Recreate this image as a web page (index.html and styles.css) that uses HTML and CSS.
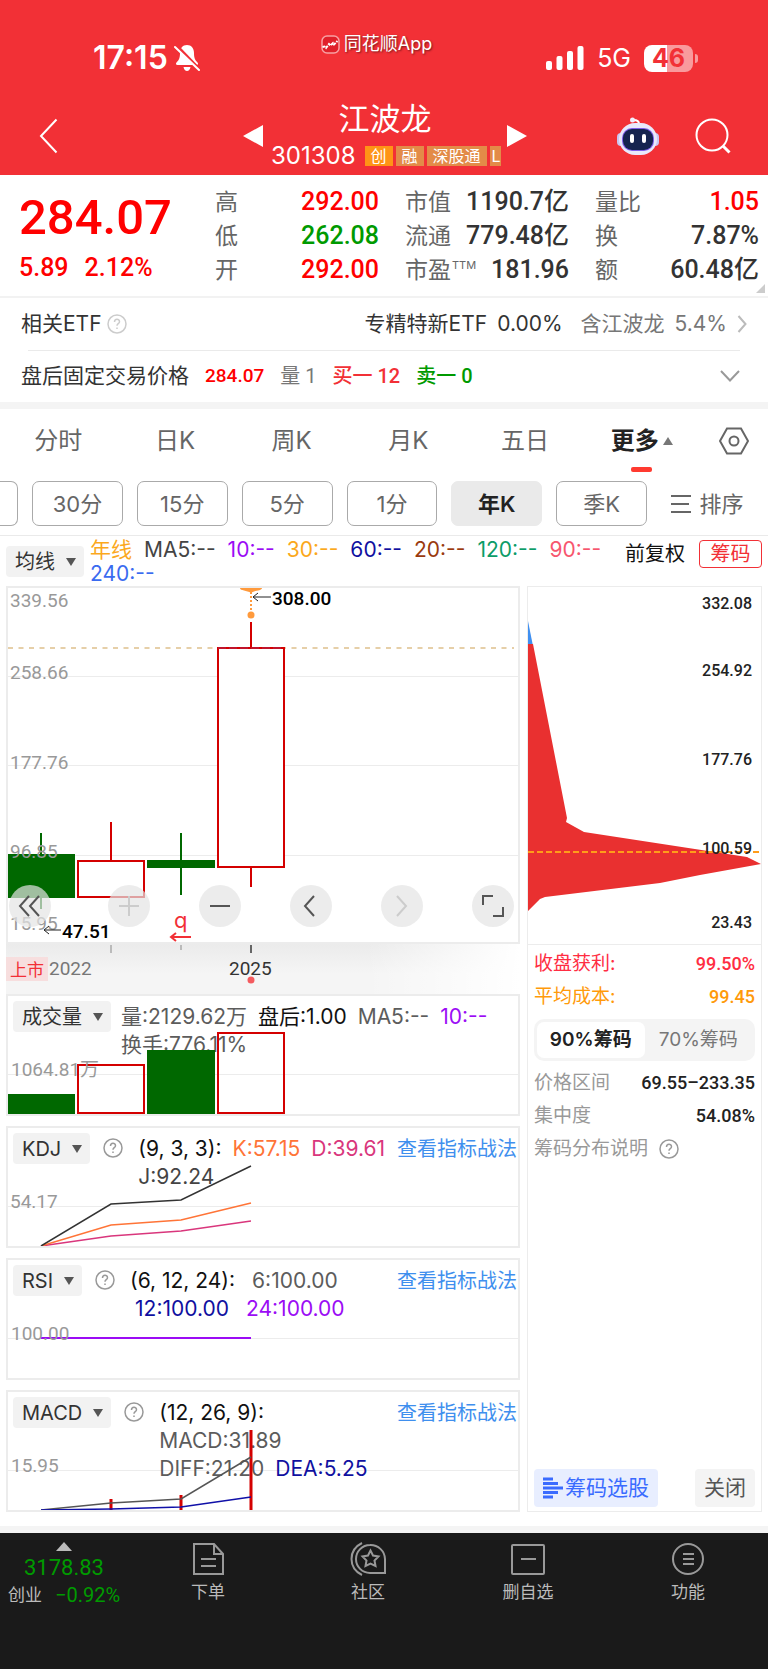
FILE: index.html
```html
<!DOCTYPE html>
<html lang="zh-CN">
<head>
  <meta charset="UTF-8">
  <meta name="viewport" content="width=device-width, initial-scale=1.0">
  <title>江波龙 301308</title>
  <link rel="stylesheet" href="styles.css">
</head>
<body>
  <header class="top">
    <div class="status">
      <div class="status-time">
        <span>17:15</span>
        <svg width="26" height="28" viewBox="0 0 26 28">
          <path d="M13 1c-4.500 0-7 3.500-7 8 0 5-1 7-3.500 9.500-1 1-.5 2.500 1 2.500h19c1.500 0 2-1.500 1-2.500C21 16 20 14 20 9c0-4.500-2.500-8-7-8z" fill="#fff"/>
          <path d="M9.500 23h7c-.5 2.500-1.800 4-3.500 4s-3-1.500-3.500-4z" fill="#fff"/>
          <path d="M3.500 2.500L26 26" stroke="#f23036" stroke-width="3"/>
          <path d="M1 3l24 23" stroke="#fff" stroke-width="2" stroke-linecap="round"/>
        </svg>
      </div>
      <div class="app-mark">
        <svg width="19" height="19" viewBox="0 0 19 19">
          <rect x="1" y="1" width="17" height="17" rx="5" fill="#e0202a" stroke="#f8a0a3" stroke-width="1.500"/>
          <path d="M1.500 12l2-.5 1.500 1.500L8 9l1.500 1.500L12 8l1 1.500L16.500 6" fill="none" stroke="#fff" stroke-width="2" stroke-dasharray="3 1"/>
        </svg>
        <span>同花顺App</span>
      </div>
      <div class="status-right">
        <svg width="38" height="26" viewBox="0 0 38 26" fill="#fff">
          <rect x="0" y="16" width="6" height="9" rx="2"/>
          <rect x="10.500" y="11" width="6" height="14" rx="2"/>
          <rect x="21" y="6" width="6" height="19" rx="2"/>
          <rect x="31.500" y="1" width="6" height="24" rx="2"/>
        </svg>
        <span class="network">5G</span>
        <span class="battery">46</span>
      </div>
    </div>
    <nav class="nav">
      <button class="icon-btn" aria-label="返回">
        <svg width="20" height="36" viewBox="0 0 20 36" fill="none" stroke="#fff" stroke-width="2"><path d="M17.500 1.500L2 18l15.500 16.500"/></svg>
      </button>
      <div class="stock">
        <button class="icon-btn" aria-label="上一只">
          <svg width="20" height="22" viewBox="0 0 20 22"><path d="M20 0v22L0 11z" fill="#fff"/></svg>
        </button>
        <div class="stock-title">
          <h1>江波龙</h1>
          <div class="stock-code">
            <span class="code">301308</span>
            <span class="tag tag-main">创</span>
            <span class="tag">融</span>
            <span class="tag">深股通</span>
            <span class="tag tag-last">L</span>
          </div>
        </div>
        <button class="icon-btn" aria-label="下一只">
          <svg width="20" height="22" viewBox="0 0 20 22"><path d="M0 0v22l20-11z" fill="#fff"/></svg>
        </button>
      </div>
      <div class="nav-tools">
        <button class="icon-btn" aria-label="智能助手">
          <svg width="42" height="40" viewBox="0 0 42 40">
            <path d="M22 8c0-3-2-4-5.500-4" fill="none" stroke="#fff" stroke-width="2"/>
            <circle cx="15.500" cy="4" r="2.500" fill="#f2eefc"/>
            <rect x="0" y="17" width="8" height="13" rx="4" fill="#c9c6f2"/>
            <rect x="34" y="17" width="8" height="13" rx="4" fill="#c9c6f2"/>
            <rect x="2" y="7" width="38" height="32" rx="16" fill="#e9e8fb"/>
            <rect x="5" y="12" width="32" height="23" rx="10" fill="#7f5de8"/>
            <rect x="6" y="13" width="30" height="21" rx="9" fill="#16244f"/>
            <rect x="13" y="18" width="4" height="9" rx="2" fill="#fff"/>
            <rect x="25" y="18" width="4" height="9" rx="2" fill="#fff"/>
          </svg>
        </button>
        <button class="icon-btn" aria-label="搜索">
          <svg width="36" height="36" viewBox="0 0 36 36" fill="none" stroke="#fff" stroke-width="2">
            <circle cx="17" cy="17" r="15.500"/><path d="M28 28l6.500 6.500" stroke-width="3"/>
          </svg>
        </button>
      </div>
    </nav>
  </header>

  <section class="quote">
    <div class="price">
      <div class="price-now">284.07</div>
      <div class="price-change"><span>5.89</span><span>2.12%</span></div>
    </div>
    <dl class="stats">
      <div><dt>高</dt><dd class="up">292.00</dd></div>
      <div><dt>低</dt><dd class="down">262.08</dd></div>
      <div><dt>开</dt><dd class="up">292.00</dd></div>
    </dl>
    <dl class="stats">
      <div><dt>市值</dt><dd>1190.7亿</dd></div>
      <div><dt>流通</dt><dd>779.48亿</dd></div>
      <div><dt>市盈<sup>TTM</sup></dt><dd>181.96</dd></div>
    </dl>
    <dl class="stats">
      <div><dt>量比</dt><dd class="up">1.05</dd></div>
      <div><dt>换</dt><dd>7.87%</dd></div>
      <div><dt>额</dt><dd>60.48亿</dd></div>
    </dl>
    <span class="corner"></span>
  </section>

  <section class="row etf">
    <span>相关ETF</span>
    <svg class="help light" width="20" height="20" viewBox="0 0 20 20"><use href="#help"/></svg>
    <a class="etf-link" href="#">
      <span>专精特新ETF</span><span>0.00%</span><span class="muted etf-hold">含江波龙</span><span class="muted">5.4%</span>
      <svg width="10" height="18" viewBox="0 0 10 18" fill="none" stroke="#bbb" stroke-width="2"><path d="M1.500 1l7 8-7 8"/></svg>
    </a>
  </section>
  <section class="row after-hours">
    <span class="after-label">盘后固定交易价格</span>
    <b class="up">284.07</b>
    <span class="muted">量 1</span>
    <span class="buy">买一 12</span>
    <span class="sell">卖一 0</span>
    <button class="icon-btn expand" aria-label="展开">
      <svg width="20" height="12" viewBox="0 0 20 12" fill="none" stroke="#999" stroke-width="2"><path d="M1 1l9 9.500L19 1"/></svg>
    </button>
  </section>
  <div class="band"></div>

  <nav class="tabs">
    <button>分时</button>
    <button>日K</button>
    <button>周K</button>
    <button>月K</button>
    <button>五日</button>
    <button class="active">更多<i class="tri-up"></i></button>
    <button aria-label="设置">
      <svg width="30" height="28" viewBox="0 0 30 28" fill="none" stroke="#666" stroke-width="2">
        <path d="M8 1.500h14L29 14l-7 12.500H8L1 14z"/><circle cx="15" cy="14" r="4.500"/>
      </svg>
    </button>
  </nav>
  <div class="periods">
    <button class="cut" aria-label="60分"></button>
    <button>30分</button>
    <button>15分</button>
    <button>5分</button>
    <button>1分</button>
    <button class="active">年K</button>
    <button>季K</button>
    <button class="sort">
      <svg width="20" height="18" viewBox="0 0 20 18" stroke="#666" stroke-width="2"><path d="M0 1h20M0 9h18M0 17h20"/></svg>
      排序
    </button>
  </div>

  <section class="averages">
    <button class="picker">均线<i class="tri-down"></i></button>
    <div class="ma-list">
      <span class="c-gold">年线</span><span class="c-dark">MA5:--</span><span class="c-purple">10:--</span><span class="c-gold">30:--</span><span class="c-navy">60:--</span><span class="c-brown">20:--</span><span class="c-green">120:--</span><span class="c-pink">90:--</span><span class="c-blue">240:--</span>
    </div>
    <button class="adjust">前复权</button>
    <button class="chips-btn">筹码</button>
  </section>

  <main class="board">
    <div class="charts">
      <div class="kline">
        <svg class="chart" viewBox="0 0 510 354">
          <path class="grid" d="M0 88.500h510M0 177.500h510M0 267.500h510"/>
          <path d="M0 60h506" stroke="#e6cfa8" stroke-width="2" stroke-dasharray="5 5.500"/>
          <path d="M33 245v76M173 245v62" stroke="#006800" stroke-width="2"/>
          <rect x="0" y="266" width="67" height="44" fill="#006800"/>
          <rect x="139" y="272" width="68" height="8" fill="#006800"/>
          <path d="M103 234v38M243 34v26M243 279v20" class="red-line"/>
          <rect x="70" y="273" width="66" height="36" class="red-box"/>
          <rect x="210" y="60" width="66" height="219" class="red-box"/>
          <path d="M210 60h66" stroke="#c0142c" stroke-width="2" stroke-dasharray="8 3"/>
          <path d="M232 0h22c0 3-7 2-11 5-4-3-11-2-11-5z" fill="#ff9a3c"/>
          <path d="M243 4v20" stroke="#ff9a3c" stroke-width="2" stroke-dasharray="2 2"/>
          <circle cx="243" cy="27" r="3.500" fill="#ff9a3c"/>
          <g class="axis-text">
            <text x="2" y="19">339.56</text>
            <text x="2" y="91">258.66</text>
            <text x="2" y="181">177.76</text>
            <text x="2" y="270">96.85</text>
            <text x="2" y="342">15.95</text>
          </g>
          <path d="M263 9h-18M250 5l-5 4 5 4M53 342H36M41 338l-5 4 5 4" fill="none" stroke="#222"/>
          <g class="mark-text">
            <text x="264" y="17">308.00</text>
            <text x="54" y="350">47.51</text>
          </g>
          <text x="166" y="340" class="q-mark">q</text>
          <path d="M183 349h-20M168 345l-5 4 5 4" fill="none" stroke="#f23036" stroke-width="2"/>
        </svg>
        <div class="tools">
          <button aria-label="最早"><svg viewBox="0 0 42 42"><path d="M20 11L11 21l9 10M30 11l-9 10 9 10"/></svg></button>
          <div class="tools-right">
            <button aria-label="放大" disabled><svg viewBox="0 0 42 42"><path d="M11 21h20M21 11v20"/></svg></button>
            <button aria-label="缩小"><svg viewBox="0 0 42 42"><path d="M11 21h20"/></svg></button>
            <button aria-label="左移"><svg viewBox="0 0 42 42"><path d="M24 11l-9 10 9 10"/></svg></button>
            <button aria-label="右移" disabled><svg viewBox="0 0 42 42"><path d="M16 11l9 10-9 10"/></svg></button>
            <button aria-label="全屏"><svg viewBox="0 0 42 42"><path d="M11 20v-9h10M31 22v9H21"/></svg></button>
          </div>
        </div>
      </div>

      <div class="dates">
        <svg class="chart" viewBox="0 0 514 50">
          <path d="M105 1v8M175 1v5" stroke="#aaa" stroke-width="1.500"/>
          <path d="M245 1v8" stroke="#666" stroke-width="2"/>
          <rect x="0" y="13" width="42" height="24" fill="#f7dede"/>
          <text x="4" y="32" class="listed">上市</text>
          <text x="43" y="31" class="year">2022</text>
          <text x="223" y="31" class="year now">2025</text>
          <circle cx="245" cy="36" r="3.500" fill="#f45b5f"/>
        </svg>
      </div>

      <div class="panel">
        <div class="panel-head">
          <button class="picker">成交量<i class="tri-down"></i></button>
          <div class="legend">
            <div><span class="c-gray">量:2129.62万</span><span class="c-black">盘后:1.00</span><span class="c-gray">MA5:--</span><span class="c-purple">10:--</span></div>
            <div><span class="c-gray">换手:776.11%</span></div>
          </div>
        </div>
        <svg class="chart" viewBox="0 0 510 118">
          <rect x="0" y="98" width="67" height="20" fill="#006800"/>
          <rect x="139" y="54" width="68" height="64" fill="#006800"/>
          <rect x="70" y="69" width="66" height="48" class="red-box open"/>
          <rect x="210" y="37" width="66" height="80" class="red-box open"/>
          <text x="3" y="80" class="axis-text">1064.81万</text>
        </svg>
      </div>

      <div class="panel">
        <div class="panel-head">
          <button class="picker">KDJ<i class="tri-down"></i></button>
          <svg class="help" width="20" height="20" viewBox="0 0 20 20"><use href="#help"/></svg>
          <div class="legend">
            <div><span class="c-black">(9, 3, 3):</span><span class="c-orange">K:57.15</span><span class="c-magenta">D:39.61</span></div>
            <div><span class="c-dark">J:92.24</span></div>
          </div>
          <a class="guide" href="#">查看指标战法</a>
        </div>
        <svg class="chart" viewBox="0 0 510 118">
          <g fill="none" stroke-width="1.500">
            <path d="M33 118l70-10 70-5 70-10" stroke="#d9367c"/>
            <path d="M33 118l70-21 70-5 70-17" stroke="#ff7437"/>
            <path d="M33 118l70-42 70-4 70-34" stroke="#333"/>
          </g>
          <text x="2" y="80" class="axis-text">54.17</text>
        </svg>
      </div>

      <div class="panel">
        <div class="panel-head">
          <button class="picker">RSI<i class="tri-down"></i></button>
          <svg class="help" width="20" height="20" viewBox="0 0 20 20"><use href="#help"/></svg>
          <div class="legend wide">
            <div><span class="c-black">(6, 12, 24):</span><span class="c-gray">6:100.00</span></div>
            <div><span class="c-navy">12:100.00</span><span class="c-purple">24:100.00</span></div>
          </div>
          <a class="guide" href="#">查看指标战法</a>
        </div>
        <svg class="chart" viewBox="0 0 510 118">
          <path d="M33 78h210" stroke="#9b0cf5" stroke-width="2"/>
          <text x="3" y="80" class="axis-text">100.00</text>
        </svg>
      </div>

      <div class="panel">
        <div class="panel-head">
          <button class="picker">MACD<i class="tri-down"></i></button>
          <svg class="help" width="20" height="20" viewBox="0 0 20 20"><use href="#help"/></svg>
          <div class="legend">
            <div><span class="c-black">(12, 26, 9):</span></div>
            <div><span class="c-gray">MACD:31.89</span></div>
            <div><span class="c-gray">DIFF:21.20</span><span class="c-navy">DEA:5.25</span></div>
          </div>
          <a class="guide" href="#">查看指标战法</a>
        </div>
        <svg class="chart" viewBox="0 0 510 118">
          <path d="M103 107v11M173 103v15M243 38v80" stroke="#d40000" stroke-width="3"/>
          <g fill="none" stroke-width="1.500">
            <path d="M33 118l70-7 70-4 70-42" stroke="#555"/>
            <path d="M33 118l70-1 70-2 70-10" stroke="#1010a8"/>
          </g>
          <text x="3" y="80" class="axis-text">15.95</text>
        </svg>
      </div>
    </div>

    <aside class="chips">
      <svg class="chart" viewBox="0 0 233 357">
        <path d="M0 34l5 25H0z" fill="#3f8ff0"/>
        <path d="M0 57h5l34 174-1 4 18 10 163 25 14 7-61 11-40 8-115 14-5 2-12 12z" fill="#e93030"/>
        <path d="M0 265h233" stroke="#ff9c1a" stroke-width="2" stroke-dasharray="6 3"/>
        <g class="chip-text" text-anchor="end">
          <text x="224" y="22">332.08</text>
          <text x="224" y="89">254.92</text>
          <text x="224" y="178">177.76</text>
          <text x="224" y="267">100.59</text>
          <text x="224" y="341">23.43</text>
        </g>
      </svg>
      <div class="chip-body">
        <dl class="chip-list">
          <div class="c-red"><dt>收盘获利:</dt><dd>99.50%</dd></div>
          <div class="c-amber"><dt>平均成本:</dt><dd>99.45</dd></div>
        </dl>
        <div class="segment">
          <button class="active">90%筹码</button>
          <button>70%筹码</button>
        </div>
        <dl class="chip-list">
          <div><dt>价格区间</dt><dd>69.55–233.35</dd></div>
          <div><dt>集中度</dt><dd>54.08%</dd></div>
          <div class="chip-note"><dt>筹码分布说明</dt><dd><svg class="help" width="20" height="20" viewBox="0 0 20 20"><use href="#help"/></svg></dd></div>
        </dl>
        <div class="chip-actions">
          <button class="pick">
            <svg width="20" height="22" viewBox="0 0 20 22" stroke="#3a6bff" stroke-width="3"><path d="M0 2h10M0 6.500h15M0 11h20M0 15.500h15M0 20h10"/></svg>筹码选股
          </button>
          <button class="close">关闭</button>
        </div>
      </div>
    </aside>
  </main>
  <div class="band"></div>

  <footer class="bottom">
    <a class="index" href="#">
      <i class="tri-up"></i>
      <span class="index-value">3178.83</span>
      <span class="index-row"><span>创业</span><span class="index-rate">−0.92%</span></span>
    </a>
    <a href="#">
      <svg width="36" height="34" viewBox="0 0 36 34"><path d="M4 2h20l9 10v20H4zM24 2v10h9M11 17h15M11 24h15"/></svg>
      下单
    </a>
    <a href="#">
      <svg width="36" height="34" viewBox="0 0 36 34"><path d="M12 1C-2 8-2 26 12 33M20 3a14 14 0 1 0 0 28h15V17A14.500 14.500 0 0 0 20 3z"/><path d="M20.500 8.500l2.500 5 5.500 1-4 4 1 5.500-5-2.500-5 2.500 1-5.500-4-4 5.500-1z"/></svg>
      社区
    </a>
    <a href="#">
      <svg width="36" height="34" viewBox="0 0 36 34"><rect x="2" y="3" width="32" height="29" rx="1"/><path d="M11 17h15"/></svg>
      删自选
    </a>
    <a href="#">
      <svg width="36" height="34" viewBox="0 0 36 34"><circle cx="18" cy="17" r="15"/><path d="M13 12h11M13 17h11M13 22h11"/></svg>
      功能
    </a>
  </footer>

  <!-- shared question mark icon -->
  <svg class="defs" width="0" height="0">
    <symbol id="help" viewBox="0 0 20 20">
      <circle cx="10" cy="10" r="9" fill="none" stroke="currentColor" stroke-width="1.500"/>
      <path d="M7.500 8c0-3.500 5-3.500 5-.3 0 2-2.500 2-2.500 4M10 13.500v1.500" fill="none" stroke="currentColor" stroke-width="1.500"/>
    </symbol>
  </svg>
</body>
</html>
```
FILE: styles.css
```css
* {
  box-sizing: border-box;
}
body {
  margin: 0;
  background: #fff;
  color: #333;
  font-family: Inter, "Noto Sans CJK SC", sans-serif;
  font-size: 20px;
  line-height: 28px;
}
button {
  margin: 0;
  padding: 0;
  border: 0;
  background: none;
  color: inherit;
  font: inherit;
  white-space: nowrap;
}
a {
  color: inherit;
  text-decoration: none;
}
h1, dl, dd {
  margin: 0;
}
svg {
  display: block;
  flex: none;
}
.defs {
  position: absolute;
}
.icon-btn {
  display: flex;
}
.chart {
  width: 100%;
  height: auto;
}
.up { color: #ff0000; }
.down { color: #009a00; }
.muted { color: #777; }

/* header */
.top {
  background: #f23036;
  color: #fff;
}
.status {
  display: grid;
  grid-template-columns: 1fr auto 1fr;
  height: 88px;
  padding: 28px 75px 0 60px;
}
.status-time {
  display: flex;
  align-items: center;
  gap: 6px;
  padding-left: 33px;
  font-size: 32px;
  font-weight: 600;
}
.app-mark {
  display: flex;
  align-items: center;
  gap: 4px;
  height: 32px;
  font-size: 18px;
  text-shadow: 1px 1px 2px rgba(0, 0, 0, 0.5);
}
.status-right {
  display: flex;
  align-items: center;
  justify-content: flex-end;
  gap: 13px;
}
.network {
  font-size: 25px;
}
.battery {
  position: relative;
  width: 49px;
  height: 27px;
  border-radius: 8px;
  background: linear-gradient(90deg, #fff 46%, #f99a9d 46%);
  color: #f23036;
  font-size: 25px;
  font-weight: 700;
  line-height: 27px;
  text-align: center;
}
.battery::after {
  content: "";
  position: absolute;
  top: 9px;
  right: -5px;
  width: 3px;
  height: 9px;
  border-radius: 0 3px 3px 0;
  background: #f99a9d;
}
.nav {
  display: grid;
  grid-template-columns: 1fr auto 1fr;
  align-items: center;
  height: 87px;
  padding: 8px 37px 0 39px;
}
.stock {
  display: flex;
  align-items: center;
  gap: 8px;
}
.stock-title {
  width: 228px;
  text-align: center;
}
.stock-title h1 {
  font-size: 31px;
  font-weight: 400;
  line-height: 40px;
}
.stock-code {
  display: flex;
  align-items: center;
  gap: 3px;
  height: 34px;
}
.code {
  margin-right: 6px;
  font-size: 24px;
}
.tag {
  flex: none;
  padding: 0 6px;
  background: #e38b48;
  font-size: 16px;
  line-height: 20px;
}
.tag-main {
  background: #ff9416;
}
.tag-last {
  padding: 0 0 0 2px;
}
.nav-tools {
  display: flex;
  align-items: center;
  justify-content: flex-end;
  gap: 36px;
}

/* quote */
.quote {
  position: relative;
  display: grid;
  grid-template-columns: 1fr repeat(3, 164px);
  gap: 26px;
  height: 123px;
  padding: 10px 9px 0 19px;
  border-bottom: 2px solid #f2f2f2;
}
.price {
  color: #ff0000;
  font-family: Roboto, sans-serif;
  font-weight: 500;
}
.price-now {
  font-size: 49px;
  line-height: 66px;
}
.price-change {
  display: flex;
  gap: 16px;
  font-size: 25px;
  line-height: 34px;
}
.stats div {
  display: flex;
  justify-content: space-between;
  line-height: 34px;
}
.stats dt {
  color: #666;
  font-size: 23px;
  white-space: nowrap;
}
.stats sup {
  margin-left: 1px;
  font-size: 11px;
  line-height: 0;
}
.stats dd {
  font-family: Roboto, "Noto Sans CJK SC", sans-serif;
  font-size: 25px;
  font-weight: 500;
  white-space: nowrap;
}
.corner {
  position: absolute;
  right: 3px;
  bottom: 3px;
  border-left: 9px solid transparent;
  border-bottom: 9px solid #ccc;
}
.row {
  display: flex;
  align-items: center;
  height: 52px;
  padding: 0 21px;
}
.etf {
  font-size: 21px;
}
.help {
  color: #999;
}
.help.light {
  margin-left: 5px;
  color: #ccc;
}
.etf-link {
  display: flex;
  align-items: center;
  gap: 10px;
  margin-left: auto;
}
.etf-hold {
  margin-left: 8px;
}
.after-hours {
  position: relative;
  gap: 16px;
  font-family: Roboto, "Noto Sans CJK SC", sans-serif;
}
.after-hours::before {
  content: "";
  position: absolute;
  top: 0;
  left: 28px;
  right: 28px;
  border-top: 1px solid #eaeaea;
}
.after-label {
  font-size: 21px;
}
.after-hours b {
  font-size: 19px;
  font-weight: 500;
}
.buy {
  color: #f23036;
  font-weight: 500;
}
.sell {
  color: #009a00;
  font-weight: 500;
}
.expand {
  margin-left: auto;
  margin-right: 7px;
}
.band {
  height: 7px;
  background: #f4f4f4;
}

/* tabs */
.tabs {
  display: grid;
  grid-template-columns: repeat(6, 1fr) 68px;
  height: 64px;
  color: #666;
  font-size: 24px;
}
.tabs button {
  position: relative;
  display: flex;
  align-items: center;
  justify-content: center;
}
.tabs .active {
  gap: 4px;
  color: #222;
  font-weight: 700;
}
.tabs .active::after {
  content: "";
  position: absolute;
  bottom: 1px;
  left: calc(50% - 11px);
  width: 21px;
  height: 5px;
  border-radius: 2px;
  background: #ff3a30;
}
.tri-up {
  border: 5px solid transparent;
  border-top: 0;
  border-bottom: 8px solid #777;
}
.tri-down {
  border: 5px solid transparent;
  border-bottom: 0;
  border-top: 8px solid #555;
}
.periods {
  display: grid;
  grid-template-columns: 18px repeat(6, 1fr) 93px;
  gap: 14px;
  height: 63px;
  padding: 8px 14px 9px 0;
  border-bottom: 1px solid #eaeaea;
  color: #666;
  font-size: 22px;
}
.periods button {
  border: 1px solid #aaa;
  border-radius: 7px;
}
.periods .cut {
  border-left: 0;
  border-radius: 0 7px 7px 0;
}
.periods .active {
  border-color: #eaeaea;
  background: #eaeaea;
  color: #222;
  font-weight: 600;
}
.periods .sort {
  display: flex;
  align-items: center;
  justify-content: center;
  gap: 8px;
  border: 0;
}

/* moving averages */
.averages {
  display: flex;
  align-items: flex-start;
  height: 50px;
  padding: 2px 6px 0;
}
.picker {
  display: flex;
  align-items: center;
  gap: 11px;
  height: 31px;
  padding: 0 8px 0 9px;
  border-radius: 4px;
  background: #f2f2f2;
}
.averages .picker {
  margin-top: 8px;
}
.ma-list {
  flex: 1;
  display: flex;
  flex-wrap: wrap;
  column-gap: 12px;
  margin: 0 10px 0 6px;
  font-size: 21px;
  line-height: 24px;
}
.adjust {
  margin: 2px 14px 0 0;
  color: #111;
}
.chips-btn {
  width: 63px;
  height: 28px;
  margin-top: 2px;
  border: 1px solid #f23036;
  border-radius: 4px;
  color: #f23036;
  line-height: 26px;
}
.c-gold { color: #fba81c; }
.c-dark { color: #444; }
.c-gray { color: #5c5c5c; }
.c-black { color: #111; }
.c-purple { color: #9b0cf5; }
.c-navy { color: #1010a0; }
.c-brown { color: #9a3a0e; }
.c-green { color: #0c9c68; }
.c-pink { color: #f7566e; }
.c-blue { color: #3a6bf0; }
.c-orange { color: #ff7437; }
.c-magenta { color: #d9367c; }

/* charts */
.board {
  display: grid;
  grid-template-columns: 1fr 235px;
  gap: 7px;
  padding: 0 6px 14px;
}
.kline {
  position: relative;
  border: 2px solid #ececec;
}
.grid {
  stroke: #ececec;
}
.red-line {
  stroke: #d40000;
  stroke-width: 2;
}
.red-box {
  fill: #fff;
  stroke: #d40000;
  stroke-width: 2;
}
.open {
  fill: none;
}
.axis-text {
  fill: #999;
  font-family: Roboto, "Noto Sans CJK SC", sans-serif;
  font-size: 19px;
}
.mark-text {
  fill: #000;
  font-family: Roboto, sans-serif;
  font-size: 19px;
  font-weight: 500;
}
.q-mark {
  fill: #f23036;
  font-size: 22px;
}
.tools {
  position: absolute;
  left: 1px;
  right: 4px;
  bottom: 15px;
  display: flex;
  justify-content: space-between;
}
.tools-right {
  display: flex;
  gap: 49px;
}
.tools button {
  width: 42px;
  height: 42px;
  border-radius: 50%;
  background: rgba(228, 228, 228, 0.7);
}
.tools svg {
  fill: none;
  stroke: #555;
  stroke-width: 2;
}
.tools button:disabled svg {
  stroke: #ccc;
}
.dates {
  background: linear-gradient(90deg, transparent 70%, #fff), linear-gradient(#ebebeb, #f5f5f5 60%);
}
.listed {
  fill: #f23036;
  font-size: 17px;
}
.year {
  fill: #777;
  font-family: Roboto, sans-serif;
  font-size: 19px;
}
.year.now {
  fill: #333;
}
.panel {
  position: relative;
  margin-bottom: 10px;
  border: 2px solid #ececec;
  background: linear-gradient(#ececec, #ececec) 0 78px / 100% 1px no-repeat;
}
.panel:last-child {
  margin-bottom: 0;
}
.panel .chart {
  position: relative;
}
.panel-head {
  position: absolute;
  top: 5px;
  left: 5px;
  right: 1px;
  display: flex;
}
.panel-head .help {
  margin: 5px 0 0 13px;
}
.legend {
  margin-left: 10px;
  padding-top: 2px;
  font-size: 21px;
}
.help + .legend {
  margin-left: 15px;
}
.legend div {
  display: flex;
  gap: 11px;
  white-space: nowrap;
}
.legend.wide div {
  gap: 17px;
}
.legend.wide div + div {
  padding-left: 5px;
}
.guide {
  margin-left: auto;
  padding-top: 2px;
  color: #3f8fee;
  white-space: nowrap;
}

/* chip distribution */
.chips {
  display: flex;
  flex-direction: column;
  border: 1px solid #ececec;
}
.chip-text {
  fill: #222;
  font-family: Roboto, sans-serif;
  font-size: 16px;
  font-weight: 500;
}
.chip-body {
  flex: 1;
  display: flex;
  flex-direction: column;
  padding: 2px 6px 4px;
  border-top: 1px solid #ececec;
}
.chip-list {
  color: #999;
  font-size: 19px;
  line-height: 33px;
}
.chip-list div {
  display: flex;
  justify-content: space-between;
}
.chip-list dd {
  color: #222;
  font-family: Roboto, sans-serif;
  font-size: 18px;
  font-weight: 500;
}
.chip-list .c-red, .c-red dd { color: #ff2d42; }
.chip-list .c-amber, .c-amber dd { color: #ff9a0a; }
.chip-list .chip-note {
  justify-content: flex-start;
  align-items: center;
  gap: 11px;
}
.segment {
  display: grid;
  grid-template-columns: 1fr 1fr;
  height: 42px;
  margin: 6px 0 5px;
  padding: 3px;
  border-radius: 10px;
  background: #f4f4f4;
  color: #777;
  font-size: 19px;
}
.segment button {
  border-radius: 7px;
}
.segment .active {
  background: #fff;
  color: #222;
  font-weight: 600;
}
.chip-actions {
  display: flex;
  justify-content: space-between;
  margin-top: auto;
}
.chip-actions button {
  height: 38px;
  padding: 0 9px;
  border-radius: 4px;
  font-size: 21px;
}
.chip-actions .pick {
  display: flex;
  align-items: center;
  gap: 2px;
  background: #e8eeff;
  color: #3a6bff;
}
.chip-actions .close {
  background: #f4f4f4;
  color: #555;
}

/* bottom bar */
.bottom {
  display: grid;
  grid-template-columns: 4fr repeat(4, 5fr);
  height: 137px;
  padding-top: 9px;
  border-bottom: 1px solid #666;
  background: #1a1a1a;
  color: #bbb;
  font-size: 17px;
  line-height: 32px;
}
.bottom a {
  display: flex;
  flex-direction: column;
  align-items: center;
}
.bottom svg {
  fill: none;
  stroke: #999;
  stroke-width: 2;
}
.bottom .tri-up {
  border-width: 0 8px 9px;
  border-bottom-color: #bbb;
}
.index-value {
  color: #009a00;
  font-family: Roboto, sans-serif;
  font-size: 22px;
  line-height: 34px;
}
.index-row {
  display: flex;
  gap: 13px;
  line-height: 20px;
}
.index-rate {
  color: #009a00;
  font-family: Roboto, sans-serif;
  font-size: 20px;
}
```
